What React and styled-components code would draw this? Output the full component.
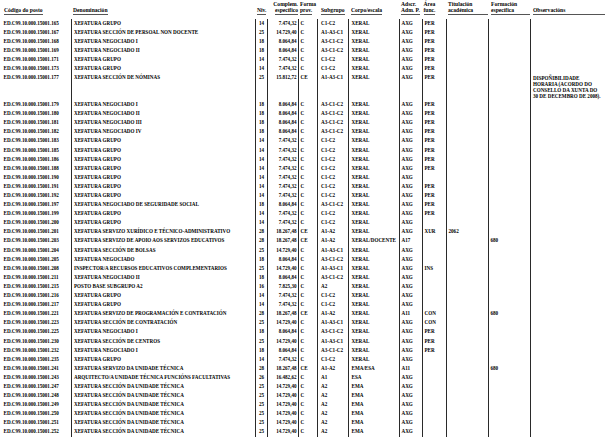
import styled, { createGlobalStyle } from 'styled-components';

const GlobalStyle = createGlobalStyle`
  html, body {
    margin: 0;
    padding: 0;
    background: #fff;
  }
  body {
    font-family: "Liberation Serif", "Times New Roman", serif;
    color: #000;
  }
`

const COLS = '68px 184px 12px 31px 19px 31px 51px 23px 24px 42px 42px 75px';
const ROW_H = 9.1;

const Sheet = styled.div`
  width: 602px;
  padding-left: 3px;
`

const HeadRow = styled.div`
  display: grid;
  grid-template-columns: ${COLS};
  align-items: end;
  height: 18.5px;
`

const HeadCell = styled.div`
  font-size: 5.6px;
  font-weight: bold;
  line-height: 6.6px;
  padding-left: ${p => p.$pl ?? 1}px;
  padding-bottom: 3.5px;
  text-align: ${p => p.$align || 'left'};
  white-space: nowrap;
`

const HeadLabel = styled.span`
  display: ${p => (p.$full ? 'block' : 'inline-block')};
  border-bottom: 1px solid #555;
`

const Row = styled.div`
  display: grid;
  grid-template-columns: ${COLS};
  height: ${p => p.$h}px;
`

const Cell = styled.div`
  font-size: 5.1px;
  font-weight: bold;
  line-height: ${ROW_H}px;
  white-space: nowrap;
  border-left: ${p => (p.$first ? 'none' : '1px solid #2a2a2a')};
  padding-left: ${p => p.$pl ?? 1.5}px;
  padding-right: ${p => p.$pr ?? 0}px;
  text-align: ${p => p.$align || 'left'};
`

const ObsText = styled.div`
  line-height: 6px;
  padding-top: 1.6px;
  white-space: nowrap;
`

const headers = [
  { l: ['Código do posto'], pl: 1 },
  { l: ['Denominación'], pl: 2 },
  { l: ['Niv.'], pl: 2 },
  { l: ['Complem.', 'específico'], align: 'right', pl: 0 },
  { l: ['Forma', 'prov.'], pl: 2 },
  { l: ['Subgrupo'], pl: 4 },
  { l: ['Corpo/escala'], pl: 3 },
  { l: ['Adscr.', 'Adm. P.'], pl: 2 },
  { l: ['Área', 'func.'], pl: 1.5 },
  { l: ['Titulación', 'académica'], pl: 2, full: true },
  { l: ['Formación', 'específica'], pl: 3, full: true },
  { l: ['Observacións'], pl: 3, full: true },
]

const OBS_177 = ['DISPOÑIBILIDADE', 'HORARIA (ACORDO DO', 'CONSELLO DA XUNTA DO', '30 DE DECEMBRO DE 2008).']

const G = ['XEFATURA GRUPO', '14', '7.474,32', 'C', 'C1-C2', 'XERAL', 'AXG']
const N = (d) => [d, '18', '8.064,84', 'C', 'A3-C1-C2', 'XERAL', 'AXG']
const UT = ['XEFATURA SECCIÓN DA UNIDADE TÉCNICA', '25', '14.729,40', 'C', 'A2', 'EMA', 'AXG']

const rows = [
  ['165', ...G, 'PER'],
  ['167', 'XEFATURA SECCIÓN DE PERSOAL NON DOCENTE', '25', '14.729,40', 'C', 'A1-A3-C1', 'XERAL', 'AXG', 'PER'],
  ['168', ...N('XEFATURA NEGOCIADO I'), 'PER'],
  ['169', ...N('XEFATURA NEGOCIADO II'), 'PER'],
  ['171', ...G, 'PER'],
  ['173', ...G, 'PER'],
  ['177', 'XEFATURA SECCIÓN DE NÓMINAS', '25', '15.812,72', 'CE', 'A1-A3-C1', 'XERAL', 'AXG', 'PER', '', '', OBS_177],
  ['179', ...N('XEFATURA NEGOCIADO I'), 'PER'],
  ['180', ...N('XEFATURA NEGOCIADO II'), 'PER'],
  ['181', ...N('XEFATURA NEGOCIADO III'), 'PER'],
  ['182', ...N('XEFATURA NEGOCIADO IV'), 'PER'],
  ['183', ...G, 'PER'],
  ['185', ...G, 'PER'],
  ['186', ...G, 'PER'],
  ['188', ...G, 'PER'],
  ['190', ...G, ''],
  ['191', ...G, 'PER'],
  ['192', ...G, 'PER'],
  ['197', ...N('XEFATURA NEGOCIADO DE SEGURIDADE SOCIAL'), 'PER'],
  ['199', ...G, 'PER'],
  ['200', ...G, ''],
  ['201', 'XEFATURA SERVIZO XURÍDICO E TÉCNICO-ADMINISTRATIVO', '28', '18.267,48', 'CE', 'A1-A2', 'XERAL', 'AXG', 'XUR', '2062'],
  ['203', 'XEFATURA SERVIZO DE APOIO AOS SERVIZOS EDUCATIVOS', '28', '18.267,48', 'CE', 'A1-A2', 'XERAL/DOCENTE', 'A17', '', '', '680'],
  ['204', 'XEFATURA SECCIÓN DE BOLSAS', '25', '14.729,40', 'C', 'A1-A3-C1', 'XERAL', 'AXG'],
  ['205', ...N('XEFATURA NEGOCIADO')],
  ['208', 'INSPECTOR/A RECURSOS EDUCATIVOS COMPLEMENTARIOS', '25', '14.729,40', 'C', 'A1-A3-C1', 'XERAL', 'AXG', 'INS'],
  ['211', ...N('XEFATURA NEGOCIADO II')],
  ['215', 'POSTO BASE SUBGRUPO A2', '16', '7.825,30', 'C', 'A2', 'XERAL', 'AXG'],
  ['216', ...G],
  ['217', ...G],
  ['221', 'XEFATURA SERVIZO DE PROGRAMACIÓN E CONTRATACIÓN', '28', '18.267,48', 'CE', 'A1-A2', 'XERAL', 'A11', 'CON', '', '680'],
  ['223', 'XEFATURA SECCIÓN DE CONTRATACIÓN', '25', '14.729,40', 'C', 'A1-A3-C1', 'XERAL', 'AXG', 'CON'],
  ['225', ...N('XEFATURA NEGOCIADO I'), 'PER'],
  ['230', 'XEFATURA SECCIÓN DE CENTROS', '25', '14.729,40', 'C', 'A1-A3-C1', 'XERAL', 'AXG', 'PER'],
  ['232', ...N('XEFATURA NEGOCIADO I'), 'PER'],
  ['235', ...G],
  ['241', 'XEFATURA SERVIZO DA UNIDADE TÉCNICA', '28', '18.267,48', 'CE', 'A1-A2', 'EMA/ESA', 'A11', '', '', '680'],
  ['243', 'ARQUITECTO/A UNIDADE TÉCNICA FUNCIÓNS FACULTATIVAS', '26', '16.482,62', 'C', 'A1', 'ESA', 'AXG'],
  ['247', ...UT],
  ['248', ...UT],
  ['249', ...UT],
  ['250', ...UT],
  ['251', ...UT],
  ['252', ...UT],
]

// per-column cell settings for data rows
const cellCfg = [
  { first: true, pl: 0.5 },
  { pl: 2 },
  { align: 'center', pl: 0 },
  { align: 'right', pl: 0, pr: 1.5 },
  { pl: 1.5 },
  { pl: 3 },
  { pl: 2.5 },
  { pl: 1.5 },
  { pl: 1.5 },
  { pl: 1.5 },
  { pl: 1.5 },
  { pl: 2 },
]

const DataRow = ({ r }) => {
  const [code, ...rest] = r
  const obs = rest[10]
  const values = [
    `ED.C99.10.000.15001.${code}`,
    ...rest.slice(0, 10),
  ]
  while (values.length < 11) values.push('')
  const tall = Array.isArray(obs)

  return (
    <Row $h={tall ? 27 : ROW_H}>
      {values.map((v, i) => (
        <Cell key={i} $first={cellCfg[i].first} $pl={cellCfg[i].pl} $pr={cellCfg[i].pr} $align={cellCfg[i].align}>
          {v}
        </Cell>
      ))}
      <Cell $pl={cellCfg[11].pl}>
        {tall && (
          <ObsText>
            {obs.map((line, k) => <div key={k}>{line}</div>)}
          </ObsText>
        )}
      </Cell>
    </Row>
  )
}

export default function App() {
  return (
    <>
      <GlobalStyle />
      <Sheet>
        <HeadRow>
          {headers.map((h, i) => (
            <HeadCell key={i} $pl={h.pl} $align={h.align}>
              {h.l.length > 1 && <div>{h.l[0]}</div>}
              <HeadLabel $full={h.full}>{h.l[h.l.length - 1]}</HeadLabel>
            </HeadCell>
          ))}
        </HeadRow>
        {rows.map(r => <DataRow key={r[0]} r={r} />)}
      </Sheet>
    </>
  )
}
